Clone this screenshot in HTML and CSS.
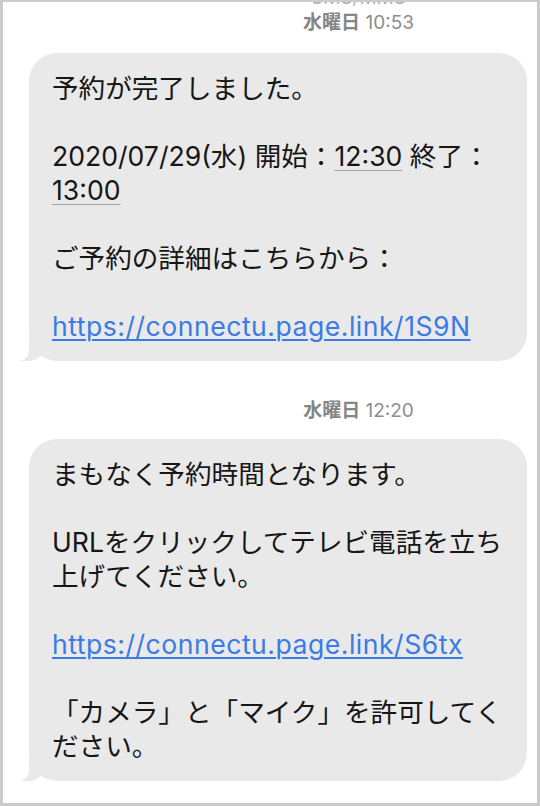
FILE: index.html
```html
<!DOCTYPE html>
<html lang="ja">
<head>
  <meta charset="UTF-8" />
  <meta name="viewport" content="width=device-width, initial-scale=1.0"/>
  <title>SMS</title>
  <link rel="stylesheet" href="styles.css">
</head>
<body>
  <div class="frame">
    <div class="stamp sender">SMS/MMS</div>
    <div class="stamp"><b>水曜日</b> 10:53</div>

    <div class="bubble">
      予約が完了しました。<br><br>
      2020/07/29(水) 開始：<span class="time">12:30</span> 終了：<wbr><span class="time">13:00</span><br><br>
      ご予約の詳細はこちらから：<br><br>
      <a href="#">https://connectu.page.link/1S9N</a>
    </div>

    <div class="stamp gap"><b>水曜日</b> 12:20</div>

    <div class="bubble">
      まもなく予約時間となります。<br><br>
      URLをクリックしてテレビ電話を立ち上げてください。<br><br>
      <a href="#">https://connectu.page.link/S6tx</a><br><br>
      「カメラ」と「マイク」を許可してください。
    </div>
  </div>
</body>
</html>
```

FILE: styles.css
```css
body { margin: 0; background: #fff; font-family: Inter, "Noto Sans CJK JP", sans-serif; color: #161616; }
.frame { box-sizing: border-box; width: 540px; height: 806px; overflow: hidden; border: 3px solid #cbcbcb; border-top-width: 2px; background: #fff; }

.stamp { padding-left: 177px; text-align: center; font-size: 19px; line-height: 22px; color: #8d8d8d; }
.stamp b { font-weight: 600; color: #858585; }
.sender { margin: -15px 0 3px; color: #b0b0b0; }
.gap { margin-top: 39px; }

.bubble { position: relative; margin: 19px 10px 0 26px; padding: 18px 14px 18px 23px; background: #e9e9e9; border-radius: 28px; font-size: 26.6px; line-height: 34px; }
.gap + .bubble { margin-top: 17px; }
.bubble::before { content: ""; position: absolute; left: -9px; bottom: 0; width: 24px; height: 24px; background: #e9e9e9; border-bottom-right-radius: 16px 14px; }
.bubble::after { content: ""; position: absolute; left: -28px; bottom: 0; width: 28px; height: 24px; background: #fff; border-bottom-right-radius: 10px; }

.bubble a { color: #3a7be6; letter-spacing: 0.5px; text-decoration: underline; text-decoration-thickness: 1.5px; text-underline-offset: 3px; }
.time { text-decoration: underline; text-decoration-color: #a3a3a3; text-decoration-thickness: 1px; text-underline-offset: 4px; }
```
